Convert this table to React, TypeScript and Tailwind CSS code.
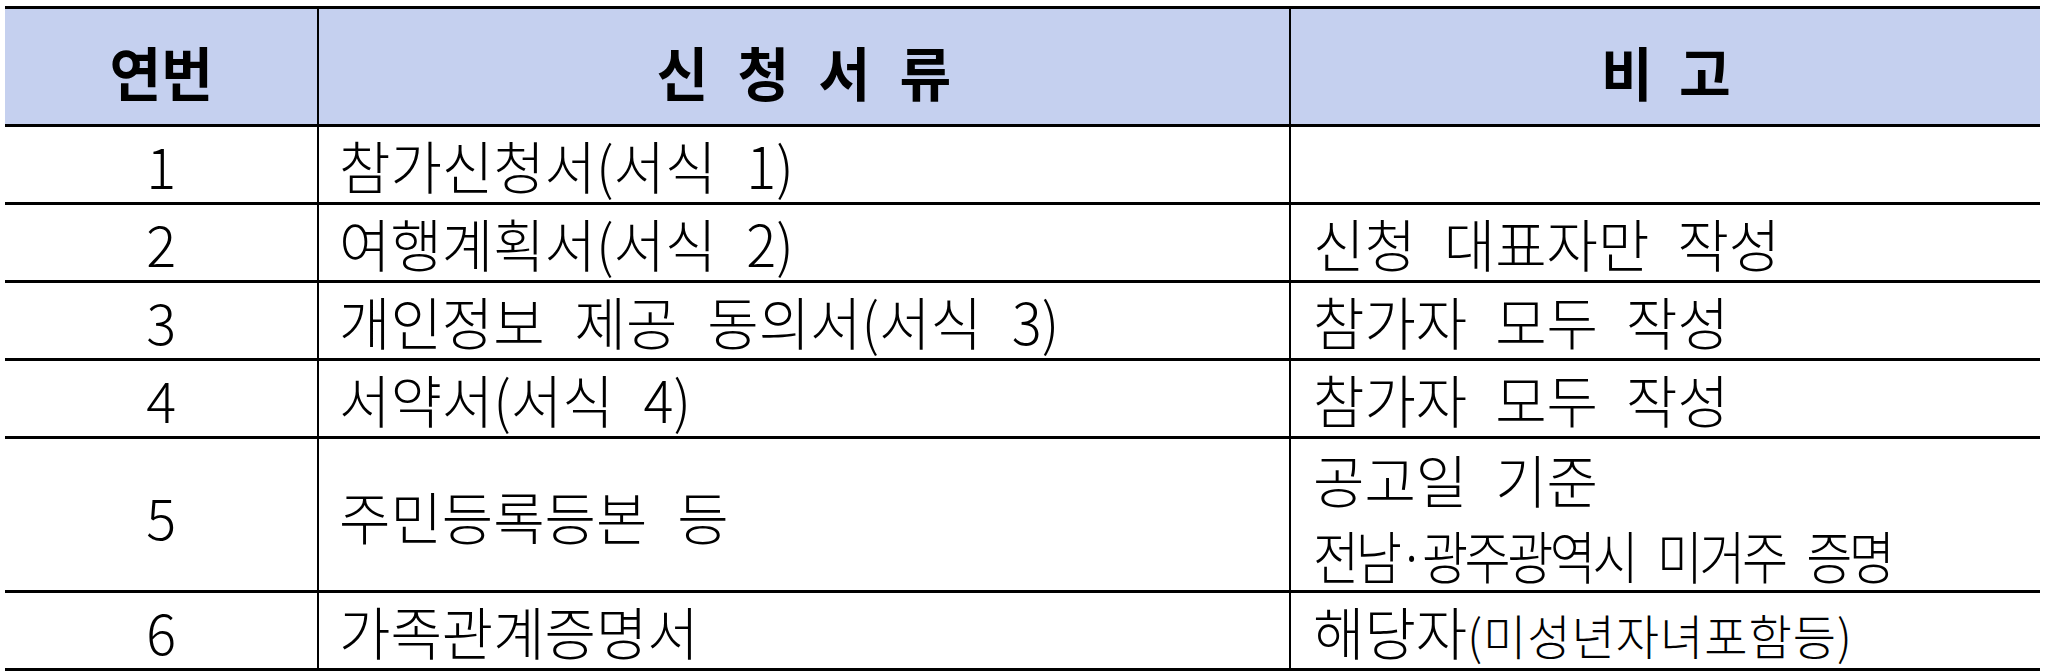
import React from 'react';

// 신청서류 안내 표
const cols = 'grid grid-cols-[312px_972px_751px]';

const Txt = ({ children, className = '' }: { children: React.ReactNode; className?: string }) => (
  <span className={`inline-block whitespace-nowrap ${className}`}>{children}</span>
);

interface RowProps {
  no: string;
  doc: string;
  note?: React.ReactNode;
  tall?: boolean;
}

const Row: React.FC<RowProps> = ({ no, doc, note, tall }) => (
  <div className={`${cols} border-b-[3px] border-black ${tall ? 'h-[154px]' : 'h-[78px]'}`}>
    <div className="flex items-center justify-center">
      <Txt className="origin-center scale-x-[0.98]">{no}</Txt>
    </div>
    <div className="flex items-center border-l-2 border-black pl-[20px]">
      <Txt className="origin-left scale-x-[0.98] [word-spacing:18px]">{doc}</Txt>
    </div>
    <div className="flex items-center border-l-2 border-black pl-[22px]">{note}</div>
  </div>
);

const Note = ({ children }: { children: React.ReactNode }) => (
  <Txt className="origin-left scale-x-[0.98] [word-spacing:16px]">{children}</Txt>
);

export default function App() {
  return (
    <div className="w-[2048px] h-[672px] bg-white pt-[6px] pl-[5px] font-['Noto_Sans_CJK_KR',sans-serif] text-black">
      <div className="w-[2035px] text-[57px] leading-none font-light">
        {/* header */}
        <div className={`${cols} h-[121px] border-y-[3px] border-black bg-[#c5d0ef] text-[58px] font-bold`}>
          <div className="flex items-center justify-center pt-[8px]">
            <Txt className="origin-center scale-x-[0.97]">연번</Txt>
          </div>
          <div className="flex items-center justify-center border-l-2 border-black pt-[8px]">
            <Txt className="origin-center scale-x-[0.97] [word-spacing:17px]">신 청 서 류</Txt>
          </div>
          <div className="flex items-center justify-center border-l-2 border-black pt-[8px]">
            <Txt className="origin-center scale-x-[0.97] [word-spacing:14px]">비 고</Txt>
          </div>
        </div>

        <Row no="1" doc="참가신청서(서식 1)" />
        <Row no="2" doc="여행계획서(서식 2)" note={<Note>신청 대표자만 작성</Note>} />
        <Row no="3" doc="개인정보 제공 동의서(서식 3)" note={<Note>참가자 모두 작성</Note>} />
        <Row no="4" doc="서약서(서식 4)" note={<Note>참가자 모두 작성</Note>} />
        <Row
          no="5"
          doc="주민등록등본 등"
          tall
          note={
            <div className="flex flex-col self-start">
              <div className="h-[78px] leading-[78px]">
                <Note>공고일 기준</Note>
              </div>
              <div className="h-[74px] leading-[74px]">
                <Txt className="origin-left scale-x-[0.88] tracking-[-4px] [word-spacing:16px]">전남·광주광역시 미거주 증명</Txt>
              </div>
            </div>
          }
        />
        <Row
          no="6"
          doc="가족관계증명서"
          note={
            <Txt className="origin-left scale-x-[0.98]">
              해당자<span className="text-[48px] tracking-[1px]">(미성년자녀포함등)</span>
            </Txt>
          }
        />
      </div>
    </div>
  );
}
